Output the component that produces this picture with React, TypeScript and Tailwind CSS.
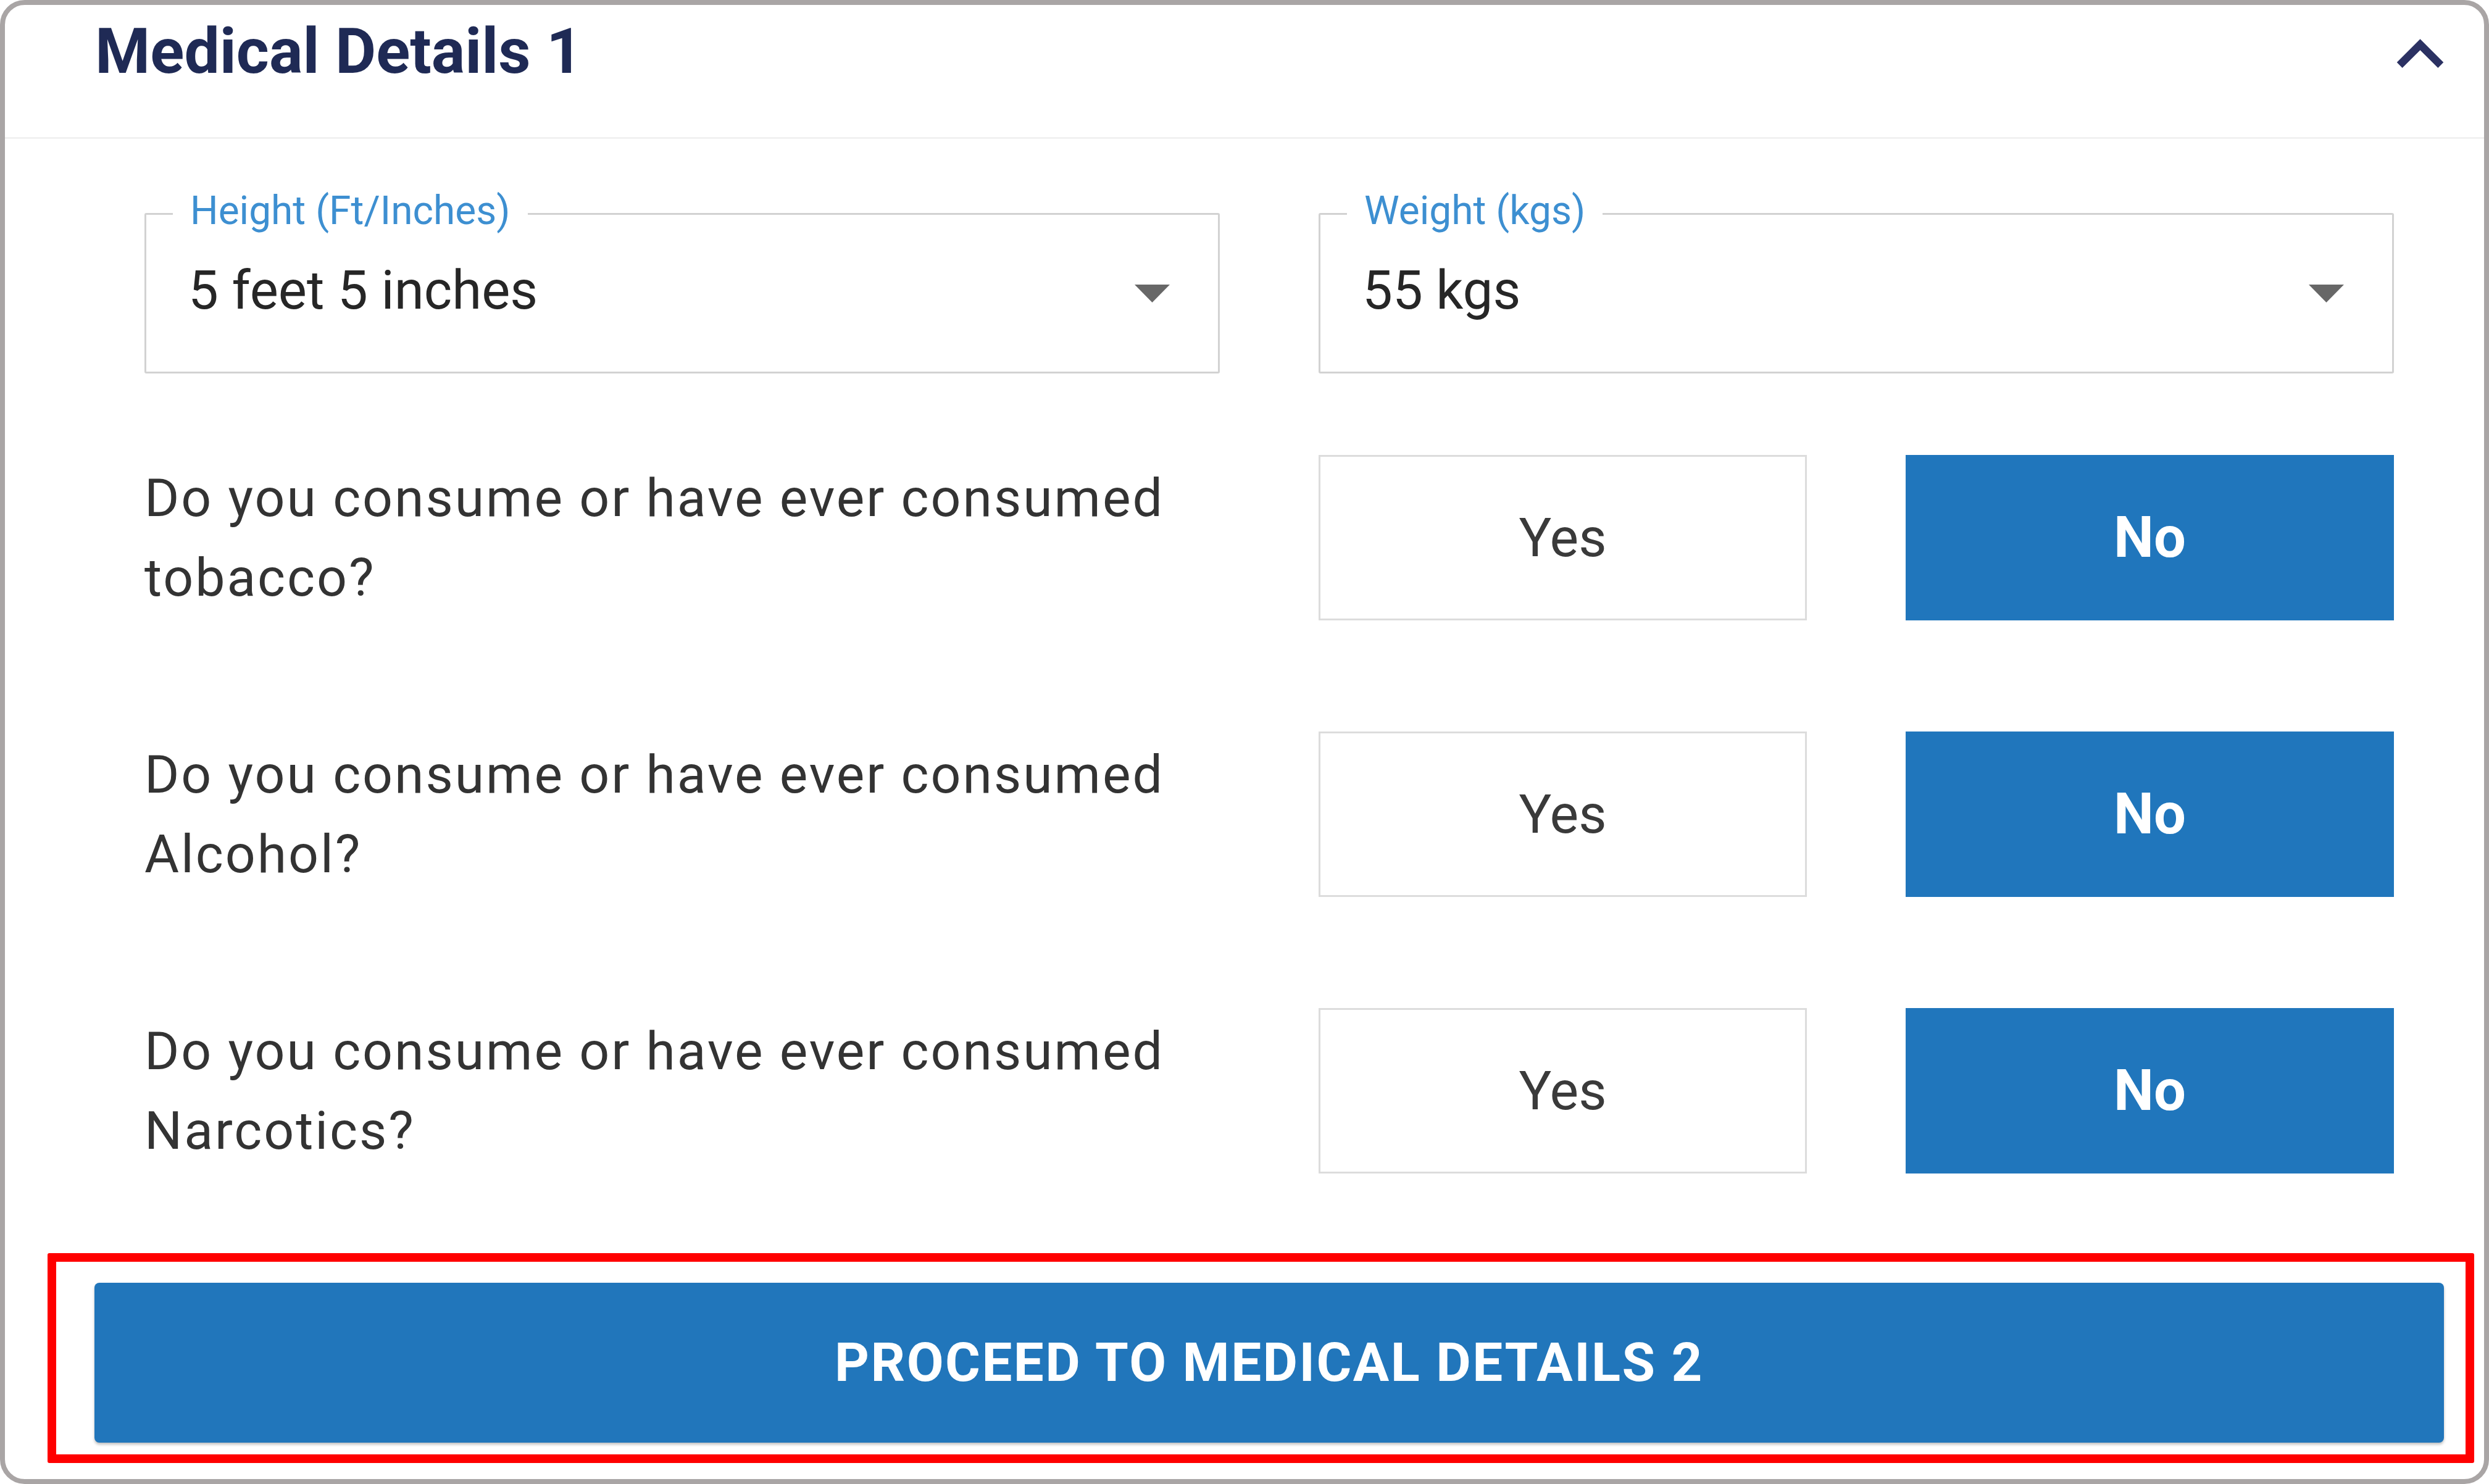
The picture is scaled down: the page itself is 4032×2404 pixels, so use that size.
import React from "react";

const FONT = { fontFamily: "Roboto, 'Liberation Sans', Arial, sans-serif" };

function SelectField({ label, value }: { label: string; value: string }) {
  return (
    <div className="relative h-[260px] border-[3px] border-[#d2d2d2] rounded-[3px] bg-white flex items-center justify-between pl-[68px] pr-[78px]">
      <span className="absolute left-[43px] top-[-6px] -translate-y-1/2 bg-white px-[28px] text-[64px] leading-none text-[#3d8fd1]">
        {label}
      </span>
      <span className="text-[87px] leading-none text-[#262626] mb-[10px]">{value}</span>
      <svg width="57" height="29" viewBox="0 0 57 29" className="shrink-0">
        <polygon points="0,0 57,0 28.5,29" fill="#676767" />
      </svg>
    </div>
  );
}

function QuestionRow({ text1, text2 }: { text1: string; text2: string }) {
  return (
    <div className="grid grid-cols-2 gap-x-[160px] items-center h-[268px]">
      <div className="text-[86px] leading-[129px] tracking-[0.034em] text-[#333333]">
        <div>{text1}</div>
        <div>{text2}</div>
      </div>
      <div className="grid grid-cols-2 gap-x-[160px] h-full">
        <div className="h-full border-[3px] border-[#dcdcdc] bg-white flex items-center justify-center text-[88px] text-[#3a3a3a]">
          Yes
        </div>
        <div className="h-full bg-[#2076bc] flex items-center justify-center text-[92px] font-bold text-white">
          No
        </div>
      </div>
    </div>
  );
}

export default function App() {
  return (
    <div className="w-[4032px] h-[2404px] bg-white" style={FONT}>
      <div className="w-full h-full border-[8px] border-[#a9a5a5] rounded-[40px] bg-white overflow-hidden flex flex-col">
        {/* Header */}
        <div className="h-[217px] shrink-0 border-b-[3px] border-[#f1f1f1] flex items-start justify-between pl-[146px] pr-[28px]">
          <div className="mt-[24px] text-[102px] leading-none font-bold text-[#1f2a55]">
            Medical Details 1
          </div>
          <svg width="151" height="151" viewBox="0 0 24 24" className="mt-[5px]">
            <path d="M12 8l-6 6 1.41 1.41L12 10.83l4.59 4.58L18 14z" fill="#2b3162" />
          </svg>
        </div>

        {/* Body */}
        <div className="pl-[226px] pr-[146px] pt-[120px]">
          <div className="grid grid-cols-2 gap-x-[160px]">
            <SelectField label="Height (Ft/Inches)" value="5 feet 5 inches" />
            <SelectField label="Weight (kgs)" value="55 kgs" />
          </div>
          <div className="mt-[132px] flex flex-col gap-y-[180px]">
            <QuestionRow text1="Do you consume or have ever consumed" text2="tobacco?" />
            <QuestionRow text1="Do you consume or have ever consumed" text2="Alcohol?" />
            <QuestionRow text1="Do you consume or have ever consumed" text2="Narcotics?" />
          </div>
        </div>

        {/* Proceed button with highlight box */}
        <div className="mt-[129px] ml-[69px] mr-[16px] border-[14px] border-[#ff0000] rounded-[3px] pt-[34px] pb-[19px] pl-[62px] pr-[35px]">
          <div className="h-[259px] rounded-[8px] bg-[#2176bb] shadow-[0_3px_4px_rgba(0,0,0,0.25)] flex items-center justify-center text-[87px] font-bold uppercase tracking-[0.028em] text-white">
            Proceed to Medical Details 2
          </div>
        </div>
      </div>
    </div>
  );
}
